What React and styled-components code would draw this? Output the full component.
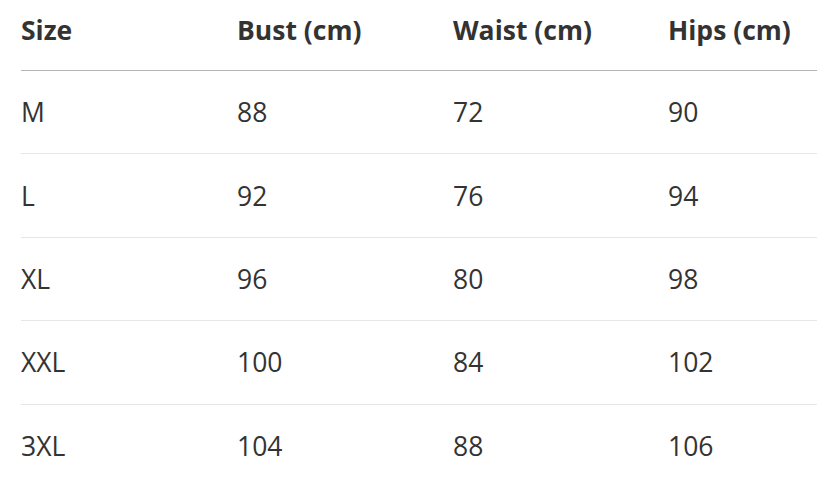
import styled, { createGlobalStyle } from 'styled-components';

const GlobalStyle = createGlobalStyle`
  html, body {
    margin: 0;
    padding: 0;
    background: #ffffff;
    overflow: hidden;
  }
  body {
    font-family: "Open Sans", "Noto Sans", "Liberation Sans", sans-serif;
    color: #333333;
  }
`;

const Wrapper = styled.div`
  padding-left: 21px;
`;

const Table = styled.table`
  width: 796px;
  border-collapse: collapse;
  table-layout: fixed;
`;

const HeadCell = styled.th`
  width: ${props => props.w || 'auto'};
  text-align: left;
  font-size: 26.5px;
  font-weight: 700;
  line-height: 36px;
  padding: 12px 0 22px;
  border-bottom: 1px solid #b5b5b5;
  white-space: nowrap;
`;

const Row = styled.tr`
  border-bottom: 1px solid #e6e6e6;
`;

const Cell = styled.td`
  font-size: 26.5px;
  font-weight: 400;
  line-height: 36px;
  padding: 23.2px 0;
  white-space: nowrap;
`;

const columns = [
  { label: 'Size', w: '216px' },
  { label: 'Bust (cm)', w: '216px' },
  { label: 'Waist (cm)', w: '215px' },
  { label: 'Hips (cm)' },
];

const sizes = [
  ['M', 88, 72, 90],
  ['L', 92, 76, 94],
  ['XL', 96, 80, 98],
  ['XXL', 100, 84, 102],
  ['3XL', 104, 88, 106],
];

export default function App() {
  return (
    <>
      <GlobalStyle />
      <Wrapper>
        <Table>
          <thead>
            <tr>
              {columns.map(col => (
                <HeadCell key={col.label} w={col.w}>
                  {col.label}
                </HeadCell>
              ))}
            </tr>
          </thead>
          <tbody>
            {sizes.map(row => (
              <Row key={row[0]}>
                {row.map((value, i) => (
                  <Cell key={i}>{value}</Cell>
                ))}
              </Row>
            ))}
          </tbody>
        </Table>
      </Wrapper>
    </>
  );
}
